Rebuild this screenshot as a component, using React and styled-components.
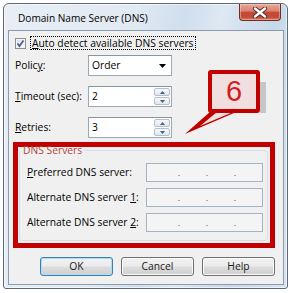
import React from "react";
import styled, { createGlobalStyle } from "styled-components";

const FONT = `"Open Sans", "Noto Sans", sans-serif`;

const GlobalStyle = createGlobalStyle`
  html, body { margin: 0; padding: 0; background: #ffffff; }
  body { font-family: ${FONT}; font-size: 10.3px; color: #000; }
  *, *::before, *::after { box-sizing: border-box; }
`;

const Page = styled.div`
  width: 291px;
  height: 293px;
  padding: 3px 0 0 3px;
  overflow: hidden;
`;

const Window = styled.div`
  width: 285px;
  height: 286px;
  border: 1px solid #5d6a78;
  border-radius: 6px 6px 3px 3px;
  background: linear-gradient(100deg, #e8eef4 0%, #e1e9f2 40%, #cfdeee 55%, #dde8f2 66%, #c6d8ea 82%, #d8e4f0 100%);
  box-shadow: inset 0 0 0 1px rgba(255, 255, 255, 0.55);
  padding: 0 3px 3px 4px;
  display: flex;
  flex-direction: column;
`;

const TitleBar = styled.div`
  height: 26px;
  flex: none;
  display: flex;
  align-items: flex-start;
  justify-content: space-between;
`;

const Title = styled.div`
  margin: 8px 0 0 10px;
  font-size: 10.1px;
  line-height: 13px;
  color: #000;
`;

const CloseButton = styled.div`
  width: 42px;
  height: 17px;
  margin: 0 3px 0 0;
  border: 1px solid #6e2b22;
  border-top: none;
  border-radius: 0 0 4px 4px;
  background: linear-gradient(to bottom, #e9a898 0%, #d98270 45%, #c54a37 50%, #c24a36 80%, #d8745b 100%);
  box-shadow: inset 0 0 0 1px rgba(255, 220, 210, 0.45);
  display: flex;
  align-items: center;
  justify-content: center;
`;

const Client = styled.div`
  position: relative;
  flex: 1;
  border: 1px solid #8a9cae;
  background: #f0f0f0;
  padding: 5px 0 0 4px;
  display: flex;
  flex-direction: column;
`;

const CheckRow = styled.div`
  margin-left: 2px;
  height: 14px;
  display: flex;
  align-items: flex-start;
  gap: 4px;
`;

const CheckBox = styled.div`
  width: 11px;
  height: 11px;
  margin-top: 2px;
  border: 1px solid #8e8f8f;
  background: linear-gradient(135deg, #dcdcdc, #ffffff);
  box-shadow: inset 0 0 0 1px #f4f4f4;
  display: flex;
  align-items: center;
  justify-content: center;
`;

const FocusLabel = styled.div`
  height: 14px;
  border: 1px dotted #000;
  padding: 0 1px;
  line-height: 12px;
  white-space: nowrap;
`;

const Fields = styled.div`
  margin: 5px 0 0 2px;
  display: flex;
  flex-direction: column;
  gap: 10px;
`;

const FieldRow = styled.div`
  height: 21px;
  display: flex;
  align-items: center;
`;

const Label = styled.div`
  width: ${(p) => p.$w}px;
  flex: none;
  white-space: nowrap;
  line-height: 13px;
`;

const InputBox = styled.div`
  width: 84px;
  height: 21px;
  border: 1px solid #9aa8b6;
  border-top-color: #8796a6;
  background: #fff;
  display: flex;
  align-items: center;
  justify-content: space-between;
  padding-left: 3px;
  line-height: 13px;
`;

const DropArrow = styled.svg`
  margin-right: 5px;
`;

const Spin = styled.div`
  align-self: stretch;
  width: 16px;
  margin: 1px 1px 1px 0;
  display: flex;
  flex-direction: column;
  gap: 1px;
`;

const SpinBtn = styled.div`
  flex: 1;
  border: 1px solid #b3bfcc;
  border-radius: 2px;
  background: linear-gradient(to bottom, #f7f8fa, #e2e7ed);
  display: flex;
  align-items: center;
  justify-content: center;
`;

const RedBox = styled.div`
  margin-top: 4px;
  width: 262px;
  height: 106px;
  border: 5px solid #c10000;
  padding: 0 2px 2px 1px;
  display: flex;
  flex-direction: column;
`;

const GroupBox = styled.fieldset`
  margin: -3px 0 0 0;
  padding: 6px 0 0 1px;
  min-width: 0;
  flex: 1;
  border: 1px solid #d6dde4;
  border-radius: 3px;
  display: flex;
  flex-direction: column;
  gap: 6px;
`;

const Legend = styled.legend`
  padding: 0 2px;
  line-height: 13px;
  color: #b5473a;
`;

const IpRow = styled.div`
  height: 19px;
  padding-left: 6px;
  display: flex;
  align-items: center;
`;

const IpBox = styled.div`
  width: 117px;
  height: 19px;
  border: 1px solid #a4b4c4;
  background: #f4f4f4;
  display: flex;
  align-items: flex-end;
  padding: 0 0 5px 31px;
  gap: 26px;
`;

const IpDot = styled.span`
  width: 2px;
  height: 1px;
  background: #a8a8a8;
`;

const ButtonRow = styled.div`
  margin-top: 9px;
  padding-right: 8px;
  display: flex;
  justify-content: flex-end;
  gap: 8px;
`;

const Button = styled.div`
  width: 73px;
  height: 19px;
  border: 1px solid ${(p) => (p.$default ? "#3d7fb0" : "#707070")};
  border-radius: 3px;
  background: linear-gradient(to bottom, #f2f2f2 0%, #ebebeb 48%, #dddddd 52%, #cfcfcf 100%);
  box-shadow: inset 0 0 0 1px ${(p) => (p.$default ? "#a8def8" : "#fbfbfb")};
  display: flex;
  align-items: center;
  justify-content: center;
  line-height: 13px;
  color: #1a1a1a;
`;

const Callout = styled.div`
  position: absolute;
  left: 199px;
  top: 39px;
  width: 52px;
  height: 43px;
  border: 4px solid #c10000;
  border-radius: 3px;
  background: #f1dede;
  display: flex;
  align-items: center;
  justify-content: center;
  font-family: "Liberation Sans", Arial, sans-serif;
  font-size: 29px;
  line-height: 29px;
  color: #d41c1c;
  &::after {
    content: "";
    position: absolute;
    right: -10px;
    top: 8px;
    bottom: -4px;
    width: 6px;
    background: #c6c6c6;
  }
`;

const Tail = styled.svg`
  position: absolute;
  left: 174px;
  top: 75px;
`;

function Triangle({ up }) {
  return (
    <svg width="5" height="3" viewBox="0 0 5 3">
      <polygon points={up ? "0,3 5,3 2.5,0" : "0,0 5,0 2.5,3"} fill="#4c607a" />
    </svg>
  );
}

function SpinInput({ value }) {
  return (
    <InputBox>
      <span>{value}</span>
      <Spin>
        <SpinBtn>
          <Triangle up />
        </SpinBtn>
        <SpinBtn>
          <Triangle />
        </SpinBtn>
      </Spin>
    </InputBox>
  );
}

function IpField() {
  return (
    <IpBox>
      <IpDot />
      <IpDot />
      <IpDot />
    </IpBox>
  );
}

export default function App() {
  return (
    <>
      <GlobalStyle />
      <Page>
        <Window>
          <TitleBar>
            <Title>Domain Name Server (DNS)</Title>
            <CloseButton>
              <svg width="16" height="11" viewBox="0 0 16 11">
                <path d="M3 1.5 L13 9.5 M13 1.5 L3 9.5" stroke="#4a2a26" strokeWidth="4.2" strokeLinecap="round" />
                <path d="M3 1.5 L13 9.5 M13 1.5 L3 9.5" stroke="#ffffff" strokeWidth="2.4" strokeLinecap="round" />
              </svg>
            </CloseButton>
          </TitleBar>
          <Client>
            <CheckRow>
              <CheckBox>
                <svg width="9" height="9" viewBox="0 0 9 9">
                  <path d="M1.5 4.5 L3.5 7 L7.5 1.5" fill="none" stroke="#4b5c9c" strokeWidth="1.7" />
                </svg>
              </CheckBox>
              <FocusLabel>
                <u>A</u>uto detect available DNS servers
              </FocusLabel>
            </CheckRow>
            <Fields>
              <FieldRow>
                <Label $w={73}>
                  Polic<u>y</u>:
                </Label>
                <InputBox>
                  <span>Order</span>
                  <DropArrow width="7" height="4" viewBox="0 0 7 4">
                    <polygon points="0,0 7,0 3.5,4" fill="#000" />
                  </DropArrow>
                </InputBox>
              </FieldRow>
              <FieldRow>
                <Label $w={73}>
                  <u>T</u>imeout (sec):
                </Label>
                <SpinInput value="2" />
              </FieldRow>
              <FieldRow>
                <Label $w={73}>
                  <u>R</u>etries:
                </Label>
                <SpinInput value="3" />
              </FieldRow>
            </Fields>
            <RedBox>
              <GroupBox>
                <Legend>DNS Servers</Legend>
                <IpRow>
                  <Label $w={119}>
                    <u>P</u>referred DNS server:
                  </Label>
                  <IpField />
                </IpRow>
                <IpRow>
                  <Label $w={119}>
                    Alternate DNS server <u>1</u>:
                  </Label>
                  <IpField />
                </IpRow>
                <IpRow>
                  <Label $w={119}>
                    Alternate DNS server <u>2</u>:
                  </Label>
                  <IpField />
                </IpRow>
              </GroupBox>
            </RedBox>
            <ButtonRow>
              <Button $default>OK</Button>
              <Button>Cancel</Button>
              <Button>Help</Button>
            </ButtonRow>
            <Tail width="60" height="30" viewBox="0 0 60 30">
              <polygon points="28,5 58,4 2,28" fill="#c10000" />
              <polygon points="34,6 50,6 17,20" fill="#f1dede" />
            </Tail>
            <Callout>6</Callout>
          </Client>
        </Window>
      </Page>
    </>
  );
}
